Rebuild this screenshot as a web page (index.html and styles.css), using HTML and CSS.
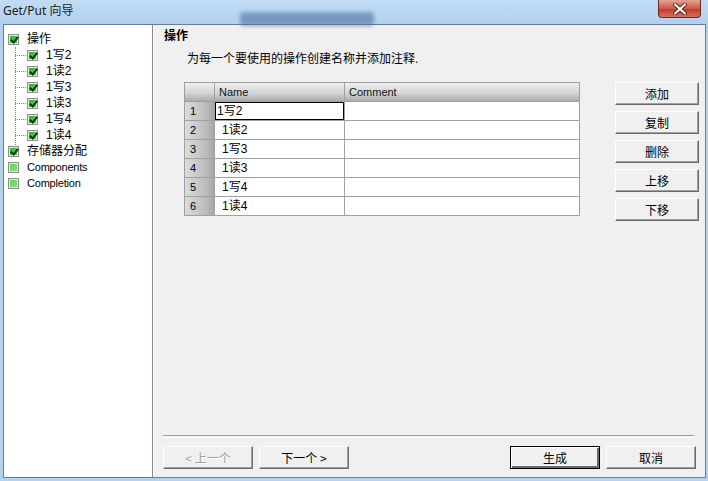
FILE: index.html
```html
<!DOCTYPE html>
<html lang="zh-CN">
<head>
  <meta charset="UTF-8">
  <title>Get/Put 向导</title>
  <link rel="stylesheet" href="styles.css">
</head>
<body>
  <div class="window">
    <div class="titlebar">
      <span class="title">Get/Put 向导</span>
      <div class="glass-blur"></div>
      <div class="close-btn">
        <svg width="16" height="12" viewBox="0 0 16 12">
          <path d="M3 1.5 L13 10.5 M13 1.5 L3 10.5" stroke="#5a1a12" stroke-width="4" stroke-linecap="round"/>
          <path d="M3 1.5 L13 10.5 M13 1.5 L3 10.5" stroke="#fff" stroke-width="2.2" stroke-linecap="round"/>
        </svg>
      </div>
    </div>

    <div class="client">
      <!-- wizard steps -->
      <div class="tree">
        <ul class="tree-root">
          <li>
            <div class="node"><span class="cb on"></span><span class="label">操作</span></div>
            <ul class="tree-children">
              <li><div class="node"><span class="cb on"></span><span class="label">1写2</span></div></li>
              <li><div class="node"><span class="cb on"></span><span class="label">1读2</span></div></li>
              <li><div class="node"><span class="cb on"></span><span class="label">1写3</span></div></li>
              <li><div class="node"><span class="cb on"></span><span class="label">1读3</span></div></li>
              <li><div class="node"><span class="cb on"></span><span class="label">1写4</span></div></li>
              <li><div class="node"><span class="cb on"></span><span class="label">1读4</span></div></li>
            </ul>
          </li>
          <li><div class="node"><span class="cb on"></span><span class="label">存储器分配</span></div></li>
          <li><div class="node"><span class="cb"></span><span class="label latin">Components</span></div></li>
          <li><div class="node"><span class="cb"></span><span class="label latin">Completion</span></div></li>
        </ul>
      </div>

      <div class="page">
        <div class="heading">操作</div>
        <div class="desc">为每一个要使用的操作创建名称并添加注释.</div>

        <div class="editor">
          <div class="grid">
            <div class="cell corner"></div>
            <div class="cell col-head">Name</div>
            <div class="cell col-head">Comment</div>

            <div class="cell row-head">1</div>
            <div class="cell name editing">1写2</div>
            <div class="cell"></div>

            <div class="cell row-head">2</div>
            <div class="cell name">1读2</div>
            <div class="cell"></div>

            <div class="cell row-head">3</div>
            <div class="cell name">1写3</div>
            <div class="cell"></div>

            <div class="cell row-head">4</div>
            <div class="cell name">1读3</div>
            <div class="cell"></div>

            <div class="cell row-head">5</div>
            <div class="cell name">1写4</div>
            <div class="cell"></div>

            <div class="cell row-head">6</div>
            <div class="cell name">1读4</div>
            <div class="cell"></div>
          </div>

          <div class="side-buttons">
            <button class="btn">添加</button>
            <button class="btn">复制</button>
            <button class="btn">删除</button>
            <button class="btn">上移</button>
            <button class="btn">下移</button>
          </div>
        </div>

        <div class="spacer"></div>
        <div class="separator"></div>

        <div class="nav">
          <button class="btn nav-btn" disabled>&lt; 上一个</button>
          <button class="btn nav-btn">下一个 &gt;</button>
          <div class="spacer"></div>
          <button class="btn nav-btn default">生成</button>
          <button class="btn nav-btn">取消</button>
        </div>
      </div>
    </div>
  </div>
</body>
</html>
```

FILE: styles.css
```css
body {
  margin: 0;
  width: 708px;
  height: 481px;
  overflow: hidden;
  background-color: #b4d2ef;
  font-family: "Liberation Sans", "Noto Sans CJK SC", sans-serif;
  font-size: 12px;
  color: #000;
}

.window {
  height: 481px;
  display: flex;
  flex-direction: column;
}

/* title bar */
.titlebar {
  height: 24px;
  flex: none;
  display: flex;
  align-items: flex-start;
  position: relative;
  background: linear-gradient(#c3dbf4, #b2d1f0);
}

.title {
  padding-left: 3px;
  line-height: 21px;
  font-family: "Noto Sans", "Noto Sans CJK SC", sans-serif;
  font-size: 12px;
  color: #1a1a1a;
}

.glass-blur {
  position: absolute;
  left: 240px;
  top: 12px;
  width: 134px;
  height: 14px;
  border-radius: 4px;
  background-color: #4f739c;
  opacity: 0.6;
  filter: blur(2px);
}

.close-btn {
  margin-left: auto;
  margin-right: 7px;
  width: 43px;
  height: 18px;
  box-sizing: border-box;
  border: 1px solid #6e2a22;
  border-top: none;
  border-radius: 0 0 4px 4px;
  background: linear-gradient(#e5a293, #cf5b45 50%, #c0392a 51%, #d5705c);
  display: flex;
  justify-content: center;
  align-items: center;
}

/* client area */
.client {
  flex: 1;
  display: flex;
  margin: 0 2px 3px 3px;
  border: 1px solid #6c7c8d;
  background-color: #f0f0f0;
}

.tree {
  width: 148px;
  flex: none;
  background-color: #fff;
  border-right: 1px solid #828790;
  box-shadow: 1px 0 0 #fff;
}

.tree ul {
  list-style: none;
  margin: 0;
  padding: 0;
}

.tree-root {
  padding: 6px 0 0 4px !important;
}

.node {
  height: 16px;
  display: flex;
  align-items: center;
}

.tree-children {
  position: relative;
  padding-left: 19px !important;
}

.tree-children::before {
  content: "";
  position: absolute;
  left: 7px;
  top: 0;
  height: 104px;
  border-left: 1px dotted #8c8c8c;
}

.tree-children .node {
  position: relative;
}

.tree-children .node::before {
  content: "";
  position: absolute;
  left: -12px;
  top: 8px;
  width: 11px;
  border-top: 1px dotted #8c8c8c;
}

.cb {
  width: 11px;
  height: 11px;
  box-sizing: border-box;
  border: 1px solid #8e8f8f;
  background: linear-gradient(135deg, #63c95a, #93e07f);
  box-shadow: inset 0 0 0 1px #d8f3cf;
  position: relative;
  flex: none;
}

.cb.on {
  background: linear-gradient(135deg, #2faa2c, #6ad35a);
}

.cb.on::after {
  content: "";
  position: absolute;
  left: 3px;
  top: 0px;
  width: 3px;
  height: 6px;
  border: solid #0d3a10;
  border-width: 0 2px 2px 0;
  transform: rotate(40deg);
}

.label {
  margin-left: 8px;
  line-height: 16px;
  white-space: nowrap;
}

.latin {
  font-size: 11px;
  letter-spacing: -0.2px;
}

/* wizard page */
.page {
  flex: 1;
  display: flex;
  flex-direction: column;
  padding: 2px 7px 8px 11px;
}

.heading {
  font-family: "Noto Sans CJK SC", sans-serif;
  font-weight: bold;
  line-height: 16px;
}

.desc {
  margin: 8px 0 0 23px;
  line-height: 16px;
}

.editor {
  margin: 15px 0 0 20px;
  display: flex;
  align-items: flex-start;
}

.grid {
  display: grid;
  grid-template-columns: 30px 130px 235px;
  grid-auto-rows: 19px;
  border-left: 1px solid #a0a0a0;
  border-top: 1px solid #a0a0a0;
  background-color: #fff;
}

.cell {
  box-sizing: border-box;
  border-right: 1px solid #a0a0a0;
  border-bottom: 1px solid #a0a0a0;
  line-height: 18px;
  padding-left: 4px;
  white-space: nowrap;
}

.corner,
.col-head {
  background: linear-gradient(#eeeeee, #d6d6d6 55%, #ababab);
}

.col-head {
  font-size: 11px;
  color: #111;
}

.row-head {
  background: linear-gradient(90deg, #dcdcdc, #bdbdbd 70%, #a6a6a6);
  font-size: 11px;
  padding-left: 5px;
}

.name {
  padding-left: 7px;
}

.name.editing {
  padding-left: 2px;
  box-shadow: inset 0 0 0 1px #000;
}

.side-buttons {
  margin-left: 35px;
  display: flex;
  flex-direction: column;
  gap: 6px;
}

.btn {
  width: 84px;
  height: 23px;
  padding: 0;
  box-sizing: border-box;
  font-family: "Noto Sans CJK SC", sans-serif;
  font-size: 12px;
  color: #000;
  background-color: #f0f0f0;
  border: 1px solid;
  border-color: #fff #6a6a6a #6a6a6a #fff;
  box-shadow: inset -1px -1px 0 #a0a0a0;
}

.btn:disabled {
  color: #a0a0a0;
  text-shadow: 1px 1px 0 #fff;
}

.spacer {
  flex: 1;
}

.separator {
  margin: 0 5px 0 -1px;
  height: 1px;
  border-top: 1px solid #a0a0a0;
  border-bottom: 1px solid #fff;
}

.nav {
  margin: 8px 3px 0 -1px;
  display: flex;
  gap: 6px;
}

.nav-btn {
  width: 90px;
}

.nav-btn.default {
  border-color: #000;
  box-shadow: inset 1px 1px 0 #fff, inset -2px -2px 0 #6a6a6a;
}
```
